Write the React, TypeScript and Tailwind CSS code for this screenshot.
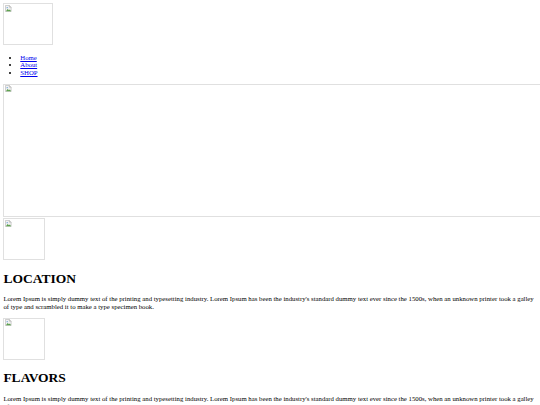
import React from "react";

function BrokenIcon() {
  return (
    <svg width="7" height="7" viewBox="0 0 16 16" className="block">
      <path d="M1 1h9l4 4v10H1z" fill="#f2f2f2" stroke="#a6a6a6" strokeWidth="1.2" />
      <path d="M10 1v4h4" fill="#dcdcdc" stroke="#a6a6a6" strokeWidth="1.2" />
      <path d="M2 14l4-5 3 3 2-2 3 4z" fill="#5aa04a" />
      <circle cx="5" cy="6" r="1.6" fill="#6b9fd6" />
    </svg>
  );
}

function Broken({ className }: { className: string }) {
  return (
    <div className={"border border-[#e0e0e0] bg-white " + className}>
      <div className="pt-[0.5px] pl-[0.5px]">
        <BrokenIcon />
      </div>
    </div>
  );
}

const LOREM =
  "Lorem Ipsum is simply dummy text of the printing and typesetting industry. Lorem Ipsum has been the industry's standard dummy text ever since the 1500s, when an unknown printer took a galley of type and scrambled it to make a type specimen book.";

function Section({ title }: { title: string }) {
  return (
    <div>
      <Broken className="w-[42px] h-[42px]" />
      <h1 className="mt-[10.7px] mb-[9px] text-[13.5px] leading-[15.5px] font-bold">{title}</h1>
      <p className="mb-[6.75px] text-[6.75px] leading-[7.76px]">{LOREM}</p>
    </div>
  );
}

export default function App() {
  return (
    <div className="w-[540px] h-[405px] overflow-hidden bg-white text-black font-['Liberation_Serif','Times_New_Roman',serif] pl-[3.375px] pt-[3px]">
      <Broken className="w-[50px] h-[42px]" />
      <ul className="mt-[8.5px] mb-[6.75px] pl-[16.9px] list-disc text-[6.75px] leading-[7.76px]">
        <li>
          <a href="#" className="text-[#0000ee] underline">Home</a>
        </li>
        <li>
          <a href="#" className="text-[#0000ee] underline">About</a>
        </li>
        <li>
          <a href="#" className="text-[#0000ee] underline">SHOP</a>
        </li>
      </ul>
      <Broken className="w-[540px] h-[133px] mb-[1.7px]" />
      <Section title="LOCATION" />
      <Section title="FLAVORS" />
    </div>
  );
}
